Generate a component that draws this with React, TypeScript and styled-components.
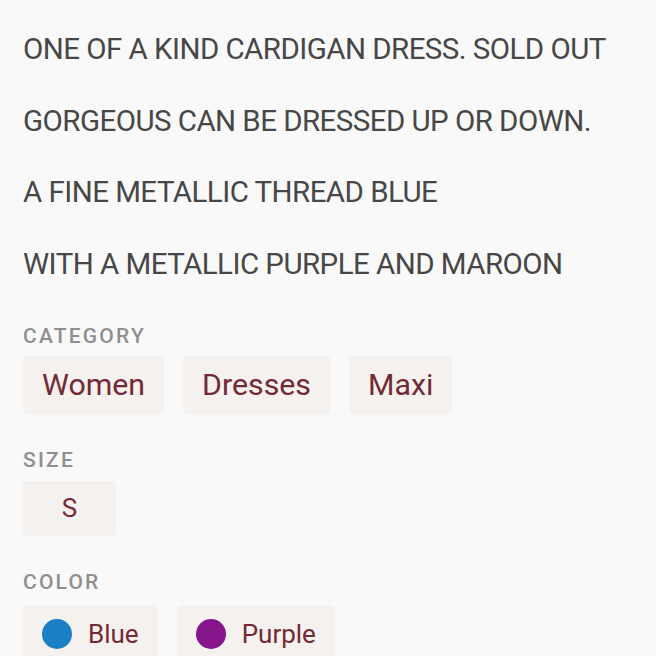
import React from "react";
import styled, { createGlobalStyle } from "styled-components";

const GlobalStyle = createGlobalStyle`
  html, body {
    margin: 0;
    padding: 0;
    background: #f9f9f9;
    font-family: Roboto, "Noto Sans", sans-serif;
  }
`;

const Page = styled.div`
  width: 656px;
  height: 656px;
  overflow: hidden;
  box-sizing: border-box;
  padding: 33px 23px 0;
  display: flex;
  flex-direction: column;
`;

const Description = styled.div`
  display: flex;
  flex-direction: column;
  gap: 39.5px;
  margin-bottom: 44px;
`;

const Line = styled.p`
  margin: 0;
  font-size: 29.5px;
  line-height: 32px;
  letter-spacing: -0.55px;
  color: #474747;
  white-space: nowrap;
`;

const Section = styled.section<{ $gap?: number }>`
  display: flex;
  flex-direction: column;
  gap: ${(p) => p.$gap ?? 8}px;
  margin-bottom: 34px;
`;

const Label = styled.div`
  font-size: 21px;
  line-height: 24px;
  font-weight: 500;
  letter-spacing: 2.2px;
  color: #8f8f8f;
`;

const Chips = styled.div`
  display: flex;
  flex-direction: row;
  gap: 19px;
`;

const Chip = styled.div<{ $min?: number; $h?: number; $size?: number }>`
  display: flex;
  align-items: center;
  justify-content: center;
  gap: 16px;
  box-sizing: border-box;
  height: ${(p) => p.$h ?? 58}px;
  min-width: ${(p) => p.$min ?? 0}px;
  padding: 0 19px;
  border-radius: 4px;
  background: #f4f1ee;
  color: #732a35;
  font-size: ${(p) => p.$size ?? 30.3}px;
`;

const Swatch = styled.span<{ $color: string }>`
  width: 30px;
  height: 30px;
  border-radius: 50%;
  background: ${(p) => p.$color};
  flex-shrink: 0;
`;

const lines = [
  "ONE OF A KIND CARDIGAN DRESS. SOLD OUT",
  "GORGEOUS CAN BE DRESSED UP OR DOWN.",
  "A FINE METALLIC THREAD BLUE",
  "WITH A METALLIC PURPLE AND MAROON",
];

export default function App() {
  return (
    <>
      <GlobalStyle />
      <Page>
        <Description>
          {lines.map((l) => (
            <Line key={l}>{l}</Line>
          ))}
        </Description>
        <Section>
          <Label>CATEGORY</Label>
          <Chips>
            <Chip>Women</Chip>
            <Chip>Dresses</Chip>
            <Chip>Maxi</Chip>
          </Chips>
        </Section>
        <Section $gap={9}>
          <Label>SIZE</Label>
          <Chips>
            <Chip $min={93} $h={55} $size={26}>S</Chip>
          </Chips>
        </Section>
        <Section $gap={11}>
          <Label>COLOR</Label>
          <Chips>
            <Chip $size={26}>
              <Swatch $color="#1a7fc5" />
              Blue
            </Chip>
            <Chip $size={26}>
              <Swatch $color="#86148a" />
              Purple
            </Chip>
          </Chips>
        </Section>
      </Page>
    </>
  );
}
